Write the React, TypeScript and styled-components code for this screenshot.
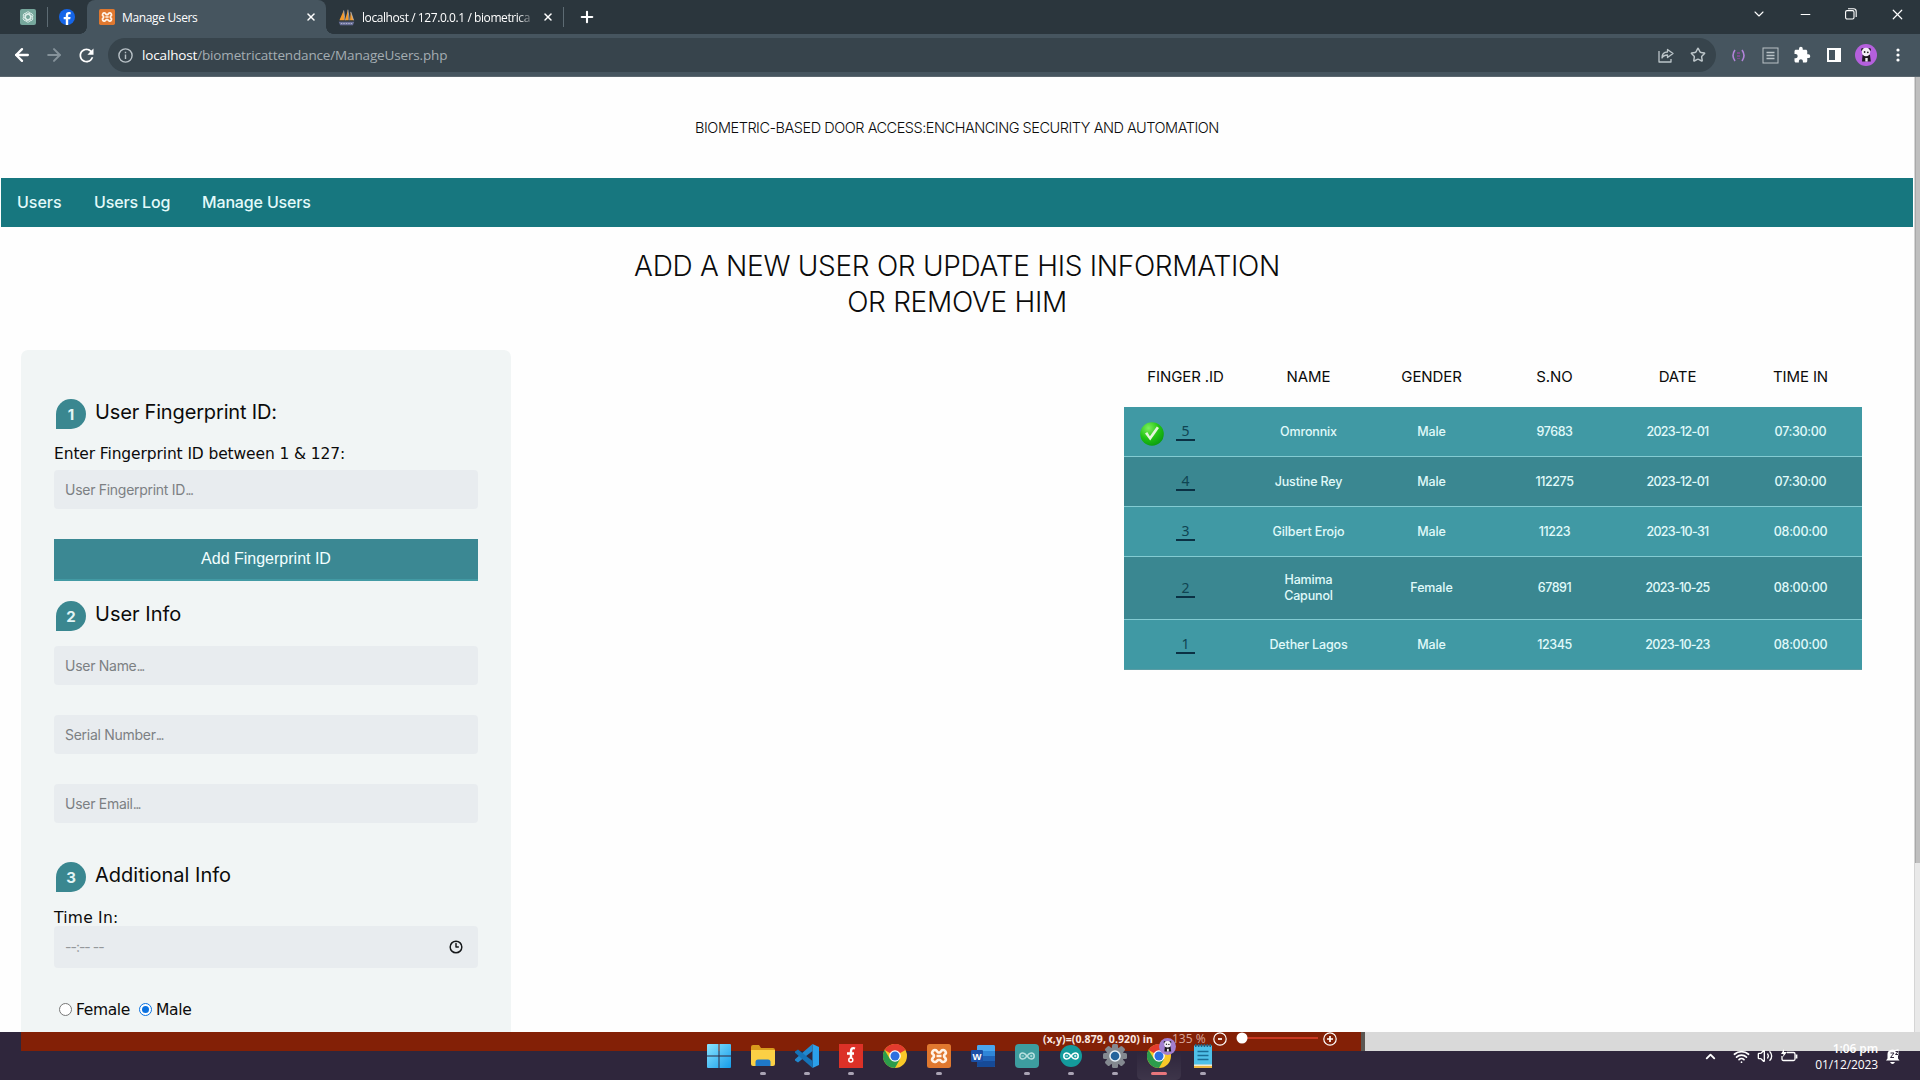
import React from 'react';
import styled, { createGlobalStyle } from 'styled-components';
import { Clock3, X, ChevronDown, ChevronUp, Minus, Star, Wifi, Volume2, ArrowLeft, ArrowRight, Plus } from 'lucide-react';
import { MdExtension, MdRefresh } from 'react-icons/md';

const grotesk = `Inter, "Liberation Sans", sans-serif`;
const verdana = `"DejaVu Sans", Verdana, sans-serif`;
const segoe = `"Open Sans", "Noto Sans", sans-serif`;

const Global = createGlobalStyle`
  * { box-sizing: border-box; }
  html, body { margin: 0; padding: 0; overflow: hidden; background: #fefefe; }
`;

const Screen = styled.div`
  width: 1920px; height: 1080px; display: flex; flex-direction: column; overflow: hidden;
  background: #fefefe; color: #0b0b0b; font-family: ${grotesk};
`;

/* Browser chrome */
const TabStrip = styled.div`
  height: 34px; flex: none; display: flex; align-items: stretch; background: #2b363d; color: #fff;
  font-family: ${segoe}; font-size: 12px; padding-left: 20px;
`;
const Pinned = styled.div<{ $w: number; $pad?: number }>`
  width: ${p => p.$w}px; padding-left: ${p => p.$pad || 0}px; display: flex; align-items: center;
`;
const Divider = styled.i`
  width: 1px; height: 20px; align-self: center; background: #5d6b73;
`;
const Tab = styled.div<{ $active?: boolean; $w: number }>`
  position: relative; width: ${p => p.$w}px; display: flex; align-items: center; padding: 0 9px 0 12px; gap: 7px;
  background: ${p => (p.$active ? '#46555f' : 'transparent')}; border-radius: 8px 8px 0 0;
  &::before, &::after {
    content: ''; position: absolute; bottom: 0; width: 7px; height: 7px; display: ${p => (p.$active ? 'block' : 'none')};
  }
  &::before { left: -7px; background: radial-gradient(circle at 0 0, transparent 6.5px, #46555f 7px); }
  &::after { right: -7px; background: radial-gradient(circle at 100% 0, transparent 6.5px, #46555f 7px); }
  svg { flex: none; }
`;
const TabTitle = styled.span<{ $fade?: boolean; $ls: number }>`
  flex: 1; white-space: nowrap; letter-spacing: ${p => p.$ls}px;
  ${p => p.$fade && 'mask-image: linear-gradient(90deg, #000 90%, transparent);'}
`;
const NewTab = styled.div`margin-left: 14px; display: flex; align-items: center;`;
const WindowButtons = styled.div`
  margin-left: auto; display: grid; grid-template-columns: repeat(4, 46px); justify-items: center; align-items: center; padding-bottom: 6px;
`;
const Toolbar = styled.div`
  height: 43px; flex: none; display: flex; align-items: center; background: #46555f; color: #fff; padding: 0 6px 0 12px;
  border-bottom: 1px solid #5b676f;
`;
const NavIcons = styled.div`width: 96px; display: flex; align-items: center; gap: 12px; svg { display: block; }`;
const Omnibox = styled.div`
  width: 1608px; height: 34px; border-radius: 17px; background: #37444c; display: flex; align-items: center;
  padding: 0 10px; font-family: ${segoe}; font-size: 13.5px; letter-spacing: -0.15px; color: #a4adb2;
`;
const Url = styled.span`margin-left: 9px; flex: 1; b { font-weight: 400; color: #fff; }`;
const BoxIcons = styled.div`display: flex; align-items: center; gap: 16px; color: #bcc5c9;`;
const Extensions = styled.div`
  margin-left: auto; display: grid; grid-template-columns: repeat(6, 32px); justify-items: center; align-items: center;
`;

/* Page */
const Viewport = styled.div`height: 955px; flex: none; display: flex; overflow: hidden;`;
const Page = styled.main`width: 1914px; overflow: hidden; padding: 0 1px;`;
const ScrollTrack = styled.div`width: 6px; background: #e9e9e9; border-left: 1px solid #d5d5d5;`;
const ScrollThumb = styled.div`height: 786px; background: #bfbfbf; border-left: 1px solid #a9a9a9;`;
const Banner = styled.header`
  height: 101px; display: flex; align-items: center; justify-content: center; font-size: 14.5px; letter-spacing: -0.47px; font-weight: 300;
`;
const Nav = styled.nav`
  height: 49px; display: flex; align-items: center; padding: 0 16px 2px; gap: 32px; background: #17777f; color: #e3fafa;
  font-size: 16px; font-weight: 500;
`;
const NavLink = styled.a<{ $w: number; $ls: number }>`width: ${p => p.$w}px; white-space: nowrap; letter-spacing: ${p => p.$ls}px;`;
const Heading = styled.h1`
  margin: 21px 0 0; text-align: center; font-weight: 300; font-size: 28px; line-height: 36px; letter-spacing: -0.29px; height: 102px;
`;
const Content = styled.div`display: flex; justify-content: space-between; padding: 0 51px 0 20px;`;
const Panel = styled.form`
  width: 490px; height: 700px; padding: 49px 33px 0; background: #f1f5f5; border-radius: 7px;
`;
const Legend = styled.div<{ $mt?: number; $ls: number }>`
  display: flex; align-items: center; height: 30px; margin: ${p => p.$mt || 0}px 0 0 2px; gap: 9px; font-size: 20px; letter-spacing: ${p => p.$ls}px;
`;
const LegendText = styled.span`padding-bottom: 4px;`;
const Badge = styled.span`
  width: 30px; height: 30px; border-radius: 15px 15px 15px 0; background: #3a8790; color: #e2f5f5; display: flex; align-items: center;
  justify-content: center; font-size: 15px; font-weight: 700; letter-spacing: 0;
`;
const Label = styled.label<{ $mt: number; $h: number; $ls: number }>`
  display: block; margin-top: ${p => p.$mt}px; height: ${p => p.$h}px; font: 15.5px/20px ${verdana}; letter-spacing: ${p => p.$ls}px; white-space: nowrap;
`;
const Field = styled.div<{ $mt?: number; $h?: number }>`
  height: ${p => p.$h || 39}px; margin-top: ${p => p.$mt || 0}px; background: #e8ecef; border-radius: 4px; display: flex; align-items: center;
  justify-content: space-between; padding: 0 15px 1px 11px; font-size: 14px; color: #7c8083; letter-spacing: -0.28px;
`;
const Dots = styled.span`letter-spacing: -1.6px;`;
const TimeValue = styled.span`letter-spacing: -1px; color: #94989b;`;
const Button = styled.button`
  display: block; width: 424px; height: 42px; margin: 30px 0 0; padding: 0 0 1px; border: 0; border-bottom: 2px solid #429aa4;
  background: #3b8893; color: #f2ffff; font: 16px "Liberation Sans", sans-serif;
`;
const Radios = styled.div`margin: 30px 0 0 5px; display: flex; align-items: center; font: 15.5px/20px ${verdana};`;
const Radio = styled.span<{ $on?: boolean }>`
  width: 13px; height: 13px; border-radius: 50%; border: 1px solid ${p => (p.$on ? '#0b72e0' : '#777')}; background: #fff;
  display: flex; align-items: center; justify-content: center; margin-right: 4px;
  &::after { content: ''; width: 7px; height: 7px; border-radius: 50%; background: ${p => (p.$on ? '#0b72e0' : 'transparent')}; }
`;
const RadioText = styled.span<{ $w: number }>`width: ${p => p.$w}px; letter-spacing: -0.35px; padding-top: 2px;`;

const Table = styled.div`width: 738px; text-align: center;`;
const TableHead = styled.div`
  display: grid; grid-template-columns: repeat(6, 123px); height: 57px; align-items: center; font-size: 15px; padding-bottom: 5px; letter-spacing: -0.1px;
`;
const TableRow = styled.div<{ $dark?: boolean; $h: number }>`
  display: grid; grid-template-columns: repeat(6, 123px); height: ${p => p.$h}px; align-items: center; font-size: 12.5px; line-height: 16px;
  color: #e0fafa; background: ${p => (p.$dark ? '#3a8791' : '#4099a4')}; border-bottom: 1px solid #83cbd2; font-weight: 500;
  &:last-child { border-color: #5a9ca4; }
`;
const Cell = styled.span<{ $ls: number }>`white-space: pre-line; letter-spacing: ${p => p.$ls}px;`;
const IdCell = styled.div`display: grid; grid-template-columns: 52px 19px; align-items: center; height: 24px; padding-top: 1px;`;
const Check = styled.div`display: flex; align-items: center; height: 18px; padding: 3px 0 0 16px; svg { display: block; flex: none; }`;
const IdLink = styled.a`
  width: 19px; height: 18px; font: 400 14px/15px "Noto Sans", sans-serif; color: #0f4452; border-bottom: 2px solid #0b3144;
`;

/* Taskbar */
const Taskbar = styled.footer`
  position: relative; height: 48px; flex: none; display: flex; background: #2f263c; color: #fff; font-family: ${segoe};
`;
const Backdrop = styled.div`
  position: absolute; left: 0; right: 0; top: 0; height: 19px; display: flex; padding-left: 21px;
`;
const StatusBar = styled.div`
  width: 1340px; background: #832006; display: flex; align-items: center; padding: 0 22px 5px 1022px; color: #fbe9e2; white-space: nowrap;
`;
const Coords = styled.b`width: 129px; font: 700 10.5px/14px "Noto Sans", sans-serif; letter-spacing: 0.1px;`;
const Zoom = styled.span`width: 41px; font-size: 12px; line-height: 14px; color: #d9a79a;`;
const Slider = styled.svg`margin: -3px 5px 0 9px; flex: none;`;
const Seam = styled.div`width: 4px; background: #5b5753;`;
const DeskStrip = styled.div`flex: 1; background: #d9d9d9;`;
const Apps = styled.div`position: relative; display: flex; margin-left: 697px;`;
const AppIcon = styled.div<{ $mark?: 'idle' | 'active' }>`
  width: 44px; height: 48px; display: flex; flex-direction: column; align-items: center; padding-top: 12px; border-radius: 5px;
  background: ${p => (p.$mark === 'active' ? 'linear-gradient(#ffffff00 40%, #ffffff12)' : 'none')};
  svg { display: block; flex: none; }
  &::after { content: ''; width: ${p => (p.$mark === 'active' ? 16 : 6)}px; height: 3px; border-radius: 2px; margin-top: 4px;
    background: ${p => (p.$mark === 'active' ? '#e8767c' : p.$mark ? '#aaa3b4' : 'transparent')}; }
`;
const Tray = styled.div`
  position: relative; margin-left: auto; display: flex; align-items: center; padding-right: 20px; svg { display: block; }
`;
const TrayIcons = styled.div`display: flex; align-items: center; gap: 7px; margin: 0 16px 0 15px;`;
const ClockText = styled.div`
  width: 64px; font-size: 12px; line-height: 16px; padding-top: 1px; text-align: right; margin-right: 7px; letter-spacing: -0.1px; white-space: nowrap;
`;
const Hour = styled.div`font-weight: 600;`;

const Xampp = ({ s = 16 }: { s?: number }) => (
  <svg width={s} height={s} viewBox="0 0 24 24">
    <rect width="24" height="24" rx="2.5" fill="#e0782f" />
    <path d="M9 6.2c-3-1-5.2 2.6-2.8 4.3 1 .8 1 2.200 0 3C3.800 15.600 6 18.800 9 17.800l2-1.800h2l2 1.800c3 1 5.200-2.200 2.800-4.300-1-.8-1-2.200 0-3C20.200 8.800 18 5.200 15 6.200L13 8.500h-2zM9.500 12h5" fill="none" stroke="#fff2e6" strokeWidth="2.600" strokeLinejoin="round" />
  </svg>
);
const Gpt = () => (
  <svg width="16" height="16" viewBox="0 0 24 24">
    <rect width="24" height="24" rx="3" fill="#76a79c" />
    <g fill="none" stroke="#e0efeb" strokeWidth="1.300">
      {[0, 60, 120, 180, 240, 300].map(a => <path key={a} transform={`rotate(${a} 12 12)`} d="M8.500 13V8a3.600 3.600 0 0 1 6.800-1.800M8.500 9.500l4-2.400 4.600 2.700" />)}
    </g>
  </svg>
);
const Facebook = () => (
  <svg width="16" height="16" viewBox="0 0 24 24">
    <circle cx="12" cy="12" r="12" fill="#1565e8" />
    <path d="M13.800 24v-8.500h3l.6-3.600h-3.600V9.800c0-1.200.5-1.900 1.900-1.900h1.800V4.700c-.9-.2-1.800-.2-2.600-.2-2.900 0-4.700 1.700-4.700 4.800v2.600H7v3.600h3.200V24z" fill="#fff" />
  </svg>
);
const Sails = () => (
  <svg width="17" height="17" viewBox="0 0 24 24">
    <path d="M8 2L2 16h7zM14 1l-4 15h5zM18 4l-1 12h5z" fill="#f39a2b" />
    <path d="M8 2l2 14M14 1l2 15M18 4l4 12" stroke="#c4c6d6" strokeWidth="1" />
    <path d="M1 18h22l-2 5H3z" fill="#696f98" />
    <path d="M4 20.500h16" stroke="#cfd1e2" strokeDasharray="2 1.500" />
  </svg>
);
const Panda = ({ s = 22, bg = '#b560dd' }: { s?: number; bg?: string }) => (
  <svg width={s} height={s} viewBox="0 0 22 22">
    <circle cx="11" cy="11" r="11" fill={bg} />
    <circle cx="7.500" cy="5.500" r="1.500" fill="#2a222e" /><circle cx="14.500" cy="5.500" r="1.500" fill="#2a222e" />
    <path d="M7.500 11h7.500l.8 6.500H7z" fill="#1d1820" />
    <circle cx="11" cy="8" r="4.200" fill="#f4eef6" />
    <path d="M10.300 14h2.400v3.500h-2.400z" fill="#eee" />
    <circle cx="9.600" cy="8" r=".9" fill="#222" /><circle cx="12.800" cy="8.300" r=".9" fill="#222" />
  </svg>
);
const Chrome = () => (
  <svg width="24" height="24" viewBox="0 0 24 24">
    <circle cx="12" cy="12" r="12" fill="#f9c828" />
    <path d="M12 12L1.600 6A12 12 0 0 1 22.400 6z" fill="#e33b2e" />
    <path d="M12 0a12 12 0 0 1 10.400 6H12z" fill="#e33b2e" />
    <path d="M1.600 6A12 12 0 0 0 12 24l5-9-5-3-5 3z" fill="#2c9c4b" />
    <circle cx="12" cy="12" r="5.800" fill="#fff" /><circle cx="12" cy="12" r="4.500" fill="#2d70e0" />
  </svg>
);
const ChromeBadged = () => (
  <svg width="24" height="24" viewBox="0 0 24 24" overflow="visible">
    <Chrome />
    <g transform="translate(12 -6)"><Panda s={17} bg="#a27fd0" /></g>
  </svg>
);
const Windows = () => (
  <svg width="24" height="24" viewBox="0 0 24 24">
    <defs><linearGradient id="win" x1="0" y1="0" x2="1" y2="1"><stop stopColor="#8be5ff" /><stop offset="1" stopColor="#159cea" /></linearGradient></defs>
    <path d="M1 0h10.500v11.500H0V1q0-1 1-1zM12.500 0H23q1 0 1 1v10.500H12.500zM0 12.500h11.500V24H1q-1 0-1-1zM12.500 12.500H24V23q0 1-1 1H12.500z" fill="url(#win)" />
  </svg>
);
const Folder = () => (
  <svg width="24" height="24" viewBox="0 0 24 24">
    <path d="M0 3q0-2 2-2h6l2 3h12q2 0 2 2v4H0z" fill="#d99a1c" />
    <path d="M0 6h24v14q0 2-2 2H2q-2 0-2-2z" fill="#fcd045" />
    <path d="M4.500 22v-4q0-2.500 2.500-2.500h10q2.500 0 2.500 2.500v4z" fill="#1f78c8" />
  </svg>
);
const VsCode = () => (
  <svg width="24" height="24" viewBox="0 0 24 24">
    <path d="M17.500 0L24 3v18l-6.500 3z" fill="#2ba0ea" />
    <path d="M17.500 0v7L3 18.500 0 16.500v-1.200z" fill="#2188cf" />
    <path d="M17.500 24v-7L3 5.500 0 7.500v1.200z" fill="#1573b8" />
  </svg>
);
const Fritzing = () => (
  <svg width="24" height="24" viewBox="0 0 24 24">
    <rect width="24" height="24" fill="#dc3127" />
    <path d="M16 4.500q-4-1.500-4 3v7M8 9.500h7" stroke="#fff" strokeWidth="2.400" fill="none" />
    <circle cx="11.800" cy="16" r="2" fill="none" stroke="#fff" strokeWidth="1.500" />
  </svg>
);
const Word = () => (
  <svg width="24" height="24" viewBox="0 0 24 24">
    <rect x="6" y="1" width="18" height="22" rx="1.500" fill="#2f86d8" />
    <path d="M6 2.500Q6 1 7.500 1h15Q24 1 24 2.500V7H6z" fill="#4aa6ee" /><path d="M6 12h18v6H6z" fill="#1f61b5" /><path d="M6 17h18v4.500q0 1.500-1.500 1.500h-15Q6 23 6 21.500z" fill="#164a97" />
    <rect x="0" y="6" width="12" height="12" rx="1.200" fill="#1b50a6" />
    <text x="6" y="15.500" fontSize="9.500" fontWeight="700" fontFamily="Liberation Sans, sans-serif" textAnchor="middle" fill="#fff">W</text>
  </svg>
);
const Arduino = ({ round }: { round?: boolean }) => (
  <svg width="24" height="24" viewBox="0 0 24 24">
    <rect x={round ? 1 : 0} y={round ? 1 : 0} width={round ? 22 : 24} height={round ? 22 : 24} rx={round ? 11 : 4} fill={round ? '#149a9c' : '#3d9d9f'} />
    <g fill="none" stroke={round ? '#fff' : '#b6e0df'} strokeWidth="1.500">
      <path d="M12 12c-1.500-2-2.700-3-4.200-3a3 3 0 0 0 0 6c1.500 0 2.700-1 4.200-3s2.700-3 4.200-3a3 3 0 0 1 0 6c-1.500 0-2.700-1-4.200-3z" />
      <path d="M6.500 12h2.500M15 12h2.500M16.250 10.750v2.500" strokeWidth=".9" />
    </g>
  </svg>
);
const Gear = () => (
  <svg width="24" height="24" viewBox="0 0 24 24">
    <g fill="#848990">{[0, 45, 90, 135].map(a => <rect key={a} x="9" y="0" width="6" height="24" rx="1.500" transform={`rotate(${a} 12 12)`} />)}</g>
    <circle cx="12" cy="12" r="9" fill="#848990" /><circle cx="12" cy="12" r="5.800" fill="#e8f1f7" /><circle cx="12" cy="12" r="4.300" fill="#23639c" />
  </svg>
);
const Notepad = () => (
  <svg width="24" height="24" viewBox="0 0 24 24">
    <path d="M3 1.500h18V24H3z" fill="#4fc0e8" /><path d="M3 20.500h18V24H3z" fill="#f4ead2" /><path d="M3 22h18v2H3z" fill="#edb63f" />
    <path d="M4 1.500h16" stroke="#1d6284" strokeWidth="3" strokeDasharray="1.500 1.400" />
    <path d="M6.500 7.500h11M6.500 11.500h11M6.500 15.500h11" stroke="#1a6d95" strokeWidth="1.500" />
  </svg>
);
const CheckBall = () => (
  <svg width="24" height="24" viewBox="0 0 24 24">
    <defs><radialGradient id="ball" cx=".35" cy=".25" r=".8"><stop stopColor="#7cf05c" /><stop offset=".55" stopColor="#22c414" /><stop offset="1" stopColor="#0a9c10" /></radialGradient></defs>
    <circle cx="12" cy="12" r="11.800" fill="url(#ball)" />
    <path d="M5 11.500l2.300-1.500 2.600 4.300L16.800 4.500l2.200 1.600L10.200 18.500z" fill="#e4f5dc" />
  </svg>
);
const Circled = ({ plus }: { plus?: boolean }) => (
  <svg width="14" height="14" viewBox="0 0 14 14" fill="none" stroke="#fff" strokeWidth="1.200">
    <circle cx="7" cy="7" r="6.200" /><path d={plus ? 'M4 7h6M7 4v6' : 'M5 7h4'} strokeWidth="1.700" />
  </svg>
);

const users = [
  ['5', 'Omronnix', 'Male', '97683', '2023-12-01', '07:30:00'],
  ['4', 'Justine Rey', 'Male', '112275', '2023-12-01', '07:30:00'],
  ['3', 'Gilbert Erojo', 'Male', '11223', '2023-10-31', '08:00:00'],
  ['2', 'Hamima\nCapunol', 'Female', '67891', '2023-10-25', '08:00:00'],
  ['1', 'Dether Lagos', 'Male', '12345', '2023-10-23', '08:00:00'],
];
const cellSpacing = [-0.15, -0.1, -0.45, -0.7, -0.3];

export default function App() {
  return (
    <Screen>
      <Global />
      <TabStrip>
        <Pinned $w={27}><Gpt /></Pinned><Divider />
        <Pinned $w={39} $pad={11}><Facebook /></Pinned>
        <Tab $active $w={239}><Xampp /><TabTitle $ls={-0.35}>Manage Users</TabTitle><X size={12} strokeWidth={3} /></Tab>
        <Tab $w={237}><Sails /><TabTitle $fade $ls={-0.42}>localhost / 127.0.0.1 / biometrica</TabTitle><X size={12} strokeWidth={3} /></Tab>
        <Divider />
        <NewTab><Plus size={18} strokeWidth={2.8} /></NewTab>
        <WindowButtons>
          <ChevronDown size={16} strokeWidth={1.6} /><Minus size={15} strokeWidth={1.6} />
          <svg width="12" height="12" viewBox="0 0 12 12" fill="none" stroke="#fff" strokeWidth="1.100"><rect x=".6" y="2.600" width="8.400" height="8.400" rx="1.500" /><path d="M3 .8h5.500q2.700 0 2.700 2.700V9" /></svg>
          <X size={17} strokeWidth={1.700} />
        </WindowButtons>
      </TabStrip>
      <Toolbar>
        <NavIcons><ArrowLeft size={20} strokeWidth={2.8} /><ArrowRight size={20} strokeWidth={2.4} color="#85929a" /><MdRefresh size={21} /></NavIcons>
        <Omnibox>
          <svg width="15" height="15" viewBox="0 0 15 15" fill="none" stroke="#b9c2c7" strokeWidth="1.400"><circle cx="7.500" cy="7.500" r="6.600" /><path d="M7.500 6.500V11M7.500 3.700v1.500" /></svg>
          <Url><b>localhost</b>/biometricattendance/ManageUsers.php</Url>
          <BoxIcons>
            <svg width="16" height="15" viewBox="0 0 16 15" fill="none" stroke="currentColor" strokeWidth="1.300"><path d="M1 3v11h12v-3M9.500 1.500L15 5.500l-5.500 4V7C7 7 5 8 4 10c0-4 2.500-6 5.500-6z" strokeLinejoin="round" /></svg>
            <Star size={16} strokeWidth={2.2} />
          </BoxIcons>
        </Omnibox>
        <Extensions>
          <svg width="15" height="13" viewBox="0 0 15 13" fill="none" strokeWidth="1.600"><path d="M4 1Q0 6.500 4 12M11 1q4 5.500 0 11" stroke="#b184d8" /><path d="M7.500 3v7" stroke="#7b4a8e" strokeWidth="3" strokeDasharray="2 1" /></svg>
          <svg width="17" height="17" viewBox="0 0 17 17" fill="none" stroke="#b9c2c6"><rect x="1" y="1" width="15" height="15" /><path d="M4.500 5.500h8M4.500 8.500h8M4.500 11.500h8" strokeWidth="1.400" /></svg>
          <MdExtension size={18} />
          <svg width="14" height="14" viewBox="0 0 14 14"><path d="M0 0h14v14H0zM2 2v10h6V2z" fill="#fff" fillRule="evenodd" /></svg>
          <Panda />
          <svg width="4" height="14" viewBox="0 0 4 14" fill="#fff"><circle cx="2" cy="2" r="1.600" /><circle cx="2" cy="7" r="1.600" /><circle cx="2" cy="12" r="1.600" /></svg>
        </Extensions>
      </Toolbar>
      <Viewport>
        <Page>
          <Banner>BIOMETRIC-BASED DOOR ACCESS:ENCHANCING SECURITY AND AUTOMATION</Banner>
          <Nav>
            <NavLink $w={45} $ls={0}>Users</NavLink><NavLink $w={76} $ls={-0.15}>Users Log</NavLink><NavLink $w={112} $ls={-0.15}>Manage Users</NavLink>
          </Nav>
          <Heading>ADD A NEW USER OR UPDATE HIS INFORMATION<br />OR REMOVE HIM</Heading>
          <Content>
            <Panel>
              <Legend $ls={-0.15}><Badge>1</Badge><LegendText>User Fingerprint ID:</LegendText></Legend>
              <Label $mt={15} $h={26} $ls={-0.12}>Enter Fingerprint ID between 1 &amp; 127:</Label>
              <Field><span>User Fingerprint ID<Dots>...</Dots></span></Field>
              <Button type="button">Add Fingerprint ID</Button>
              <Legend $mt={20} $ls={0}><Badge>2</Badge><LegendText>User Info</LegendText></Legend>
              <Field $mt={15}><span>User Name<Dots>...</Dots></span></Field>
              <Field $mt={30}><span>Serial Number<Dots>...</Dots></span></Field>
              <Field $mt={30}><span>User Email<Dots>...</Dots></span></Field>
              <Legend $mt={39} $ls={0}><Badge>3</Badge><LegendText>Additional Info</LegendText></Legend>
              <Label $mt={16} $h={18} $ls={0.25}>Time In:</Label>
              <Field $h={42}><TimeValue>--:-- --</TimeValue><Clock3 size={14} strokeWidth={2.5} color="#16191b" /></Field>
              <Radios><Radio /><RadioText $w={63}>Female</RadioText><Radio $on /><RadioText $w={60}>Male</RadioText></Radios>
            </Panel>
            <Table>
              <TableHead>{['FINGER .ID', 'NAME', 'GENDER', 'S.NO', 'DATE', 'TIME IN'].map(h => <span key={h}>{h}</span>)}</TableHead>
              {users.map(([id, ...rest], i) => (
                <TableRow key={id} $dark={i % 2 === 1} $h={id === '2' ? 63 : 50}>
                  <IdCell><Check>{i === 0 && <CheckBall />}</Check><IdLink>{id}</IdLink></IdCell>
                  {rest.map((v, j) => <Cell key={j} $ls={cellSpacing[j]}>{v}</Cell>)}
                </TableRow>
              ))}
            </Table>
          </Content>
        </Page>
        <ScrollTrack><ScrollThumb /></ScrollTrack>
      </Viewport>
      <Taskbar>
        <Backdrop>
          <StatusBar>
            <Coords>(x,y)=(0.879, 0.920) in</Coords><Zoom>135 %</Zoom><Circled />
            <Slider width="82" height="12" viewBox="0 0 82 12"><path d="M6 6h76" stroke="#c93821" strokeWidth="2" /><circle cx="6" cy="6" r="5.500" fill="#fff" /></Slider>
            <Circled plus />
          </StatusBar>
          <Seam /><DeskStrip />
        </Backdrop>
        <Apps>
          <AppIcon><Windows /></AppIcon>
          <AppIcon $mark="idle"><Folder /></AppIcon>
          <AppIcon $mark="idle"><VsCode /></AppIcon>
          <AppIcon $mark="idle"><Fritzing /></AppIcon>
          <AppIcon><Chrome /></AppIcon>
          <AppIcon $mark="idle"><Xampp s={24} /></AppIcon>
          <AppIcon><Word /></AppIcon>
          <AppIcon $mark="idle"><Arduino /></AppIcon>
          <AppIcon $mark="idle"><Arduino round /></AppIcon>
          <AppIcon $mark="idle"><Gear /></AppIcon>
          <AppIcon $mark="active"><ChromeBadged /></AppIcon>
          <AppIcon $mark="idle"><Notepad /></AppIcon>
        </Apps>
        <Tray>
          <ChevronUp size={15} strokeWidth={3} />
          <TrayIcons>
            <Wifi size={17} strokeWidth={2.4} /><Volume2 size={16} strokeWidth={2} />
            <svg width="18" height="14" viewBox="0 0 18 14" fill="none" stroke="#fff" strokeWidth="1.300"><path d="M7 3.500h6.500q1.500 0 1.500 1.500v5q0 1.500-1.500 1.500h-10Q2 11.500 2 10V7" /><path d="M16.500 5.500v4" strokeWidth="1.800" /><path d="M4 0L1 5h2.500L3 8l4-5H4z" fill="#fff" stroke="none" /></svg>
          </TrayIcons>
          <ClockText><Hour>1:06 pm</Hour><div>01/12/2023</div></ClockText>
          <svg width="15" height="15" viewBox="0 0 15 15"><path d="M1 11.500l1.500-2V5q0-4 5-4.500L10 1l3.500-1v6l-.5 1v2.500l1.500 2zM5 13h5q-1 2-2.500 2T5 13z" fill="#fff" /><path d="M5.500 4h3.500L5.500 8.500H9M10.500 2.500h2.500l-2.500 3H13" fill="none" stroke="#2f263c" /></svg>
        </Tray>
      </Taskbar>
    </Screen>
  );
}
